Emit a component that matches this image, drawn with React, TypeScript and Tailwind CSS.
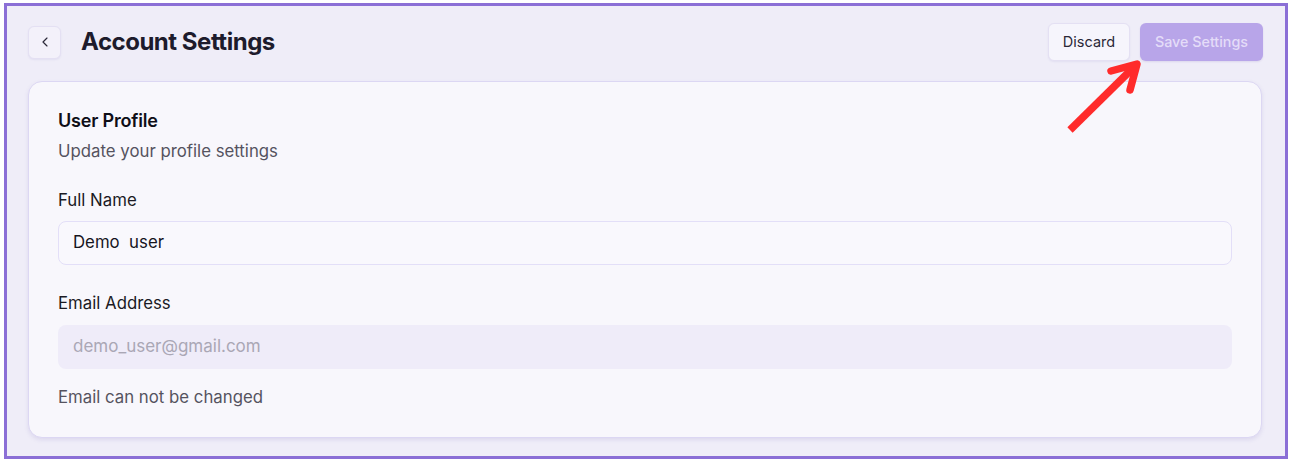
import { ChevronLeft } from "lucide-react";

const App = () => {
  return (
    <div className="h-[462px] w-[1291px] bg-white pl-1 pt-[3px] font-['Inter',sans-serif]">
      <div className="relative h-[456px] w-[1284px] border-[3px] border-[#8b6fd6] bg-[#efedf8] px-[21px] pt-[17px]">
        <div className="flex items-center justify-between">
          <div className="flex items-center gap-5">
            <button className="flex h-[33px] w-[33px] items-center justify-center rounded-md border border-[#e4e0f3] bg-[#f3f1fa] text-[#2a2838] shadow-[0_1px_2px_rgba(80,60,160,0.08)]">
              <ChevronLeft className="h-4 w-4" strokeWidth={1.75} />
            </button>
            <h1 className="text-[24px] font-bold tracking-[-0.02em] text-[#1d1b2c]">Account Settings</h1>
          </div>
          <div className="flex items-center gap-[10px] pr-[1px]">
            <button className="h-[38px] w-[82px] rounded-md border border-[#e4e0f3] bg-[#f6f5fc] text-[14.5px] text-[#2a2838] shadow-[0_1px_2px_rgba(80,60,160,0.08)]">
              Discard
            </button>
            <button className="h-[38px] w-[123px] rounded-md bg-[#b8a5e9] text-[14.3px] font-medium text-[#e4dcf8] shadow-[0_1px_2px_rgba(80,60,160,0.12)]">
              Save Settings
            </button>
          </div>
        </div>

        <div className="mt-[20px] h-[357px] w-[1234px] rounded-[14px] border border-[#dcd7f3] bg-[#f8f7fc] px-[29px] pt-[25px] shadow-[0_2px_4px_rgba(90,70,170,0.12)]">
          <h2 className="text-[18px] leading-7 font-semibold tracking-[-0.01em] text-[#0f0e17]">User Profile</h2>
          <p className="mt-[4px] text-[16.8px] leading-6 text-[#55535f]">Update your profile settings</p>

          <label className="mt-[25px] block text-[16.8px] leading-6 text-[#1b1a24]">Full Name</label>
          <div className="mt-[9px] flex h-[44px] items-center rounded-lg border border-[#e3dff8] bg-[#f9f8fd] px-[14px] text-[16.8px] text-[#16151d]">
            Demo&nbsp;&nbsp;user
          </div>

          <label className="mt-[26px] block text-[16.8px] leading-6 text-[#1b1a24]">Email Address</label>
          <div className="mt-[10px] flex h-[44px] items-center rounded-lg bg-[#efecf9] px-[15px] text-[17px] text-[#aaa7b5]">
            demo_user@gmail.com
          </div>
          <p className="mt-[16px] text-[16.8px] leading-6 text-[#55535f]">Email can not be changed</p>
        </div>

        <svg className="absolute left-[1053px] top-[46px]" width="100" height="100" viewBox="0 0 100 100">
          <g stroke="#ff2b2b" strokeWidth="7.5" fill="none">
            <line x1="10" y1="78" x2="74" y2="15" strokeLinecap="butt" />
            <polyline points="51,19 77,12 70,38" strokeLinecap="round" strokeLinejoin="round" />
          </g>
        </svg>
      </div>
    </div>
  );
};

export default App;
